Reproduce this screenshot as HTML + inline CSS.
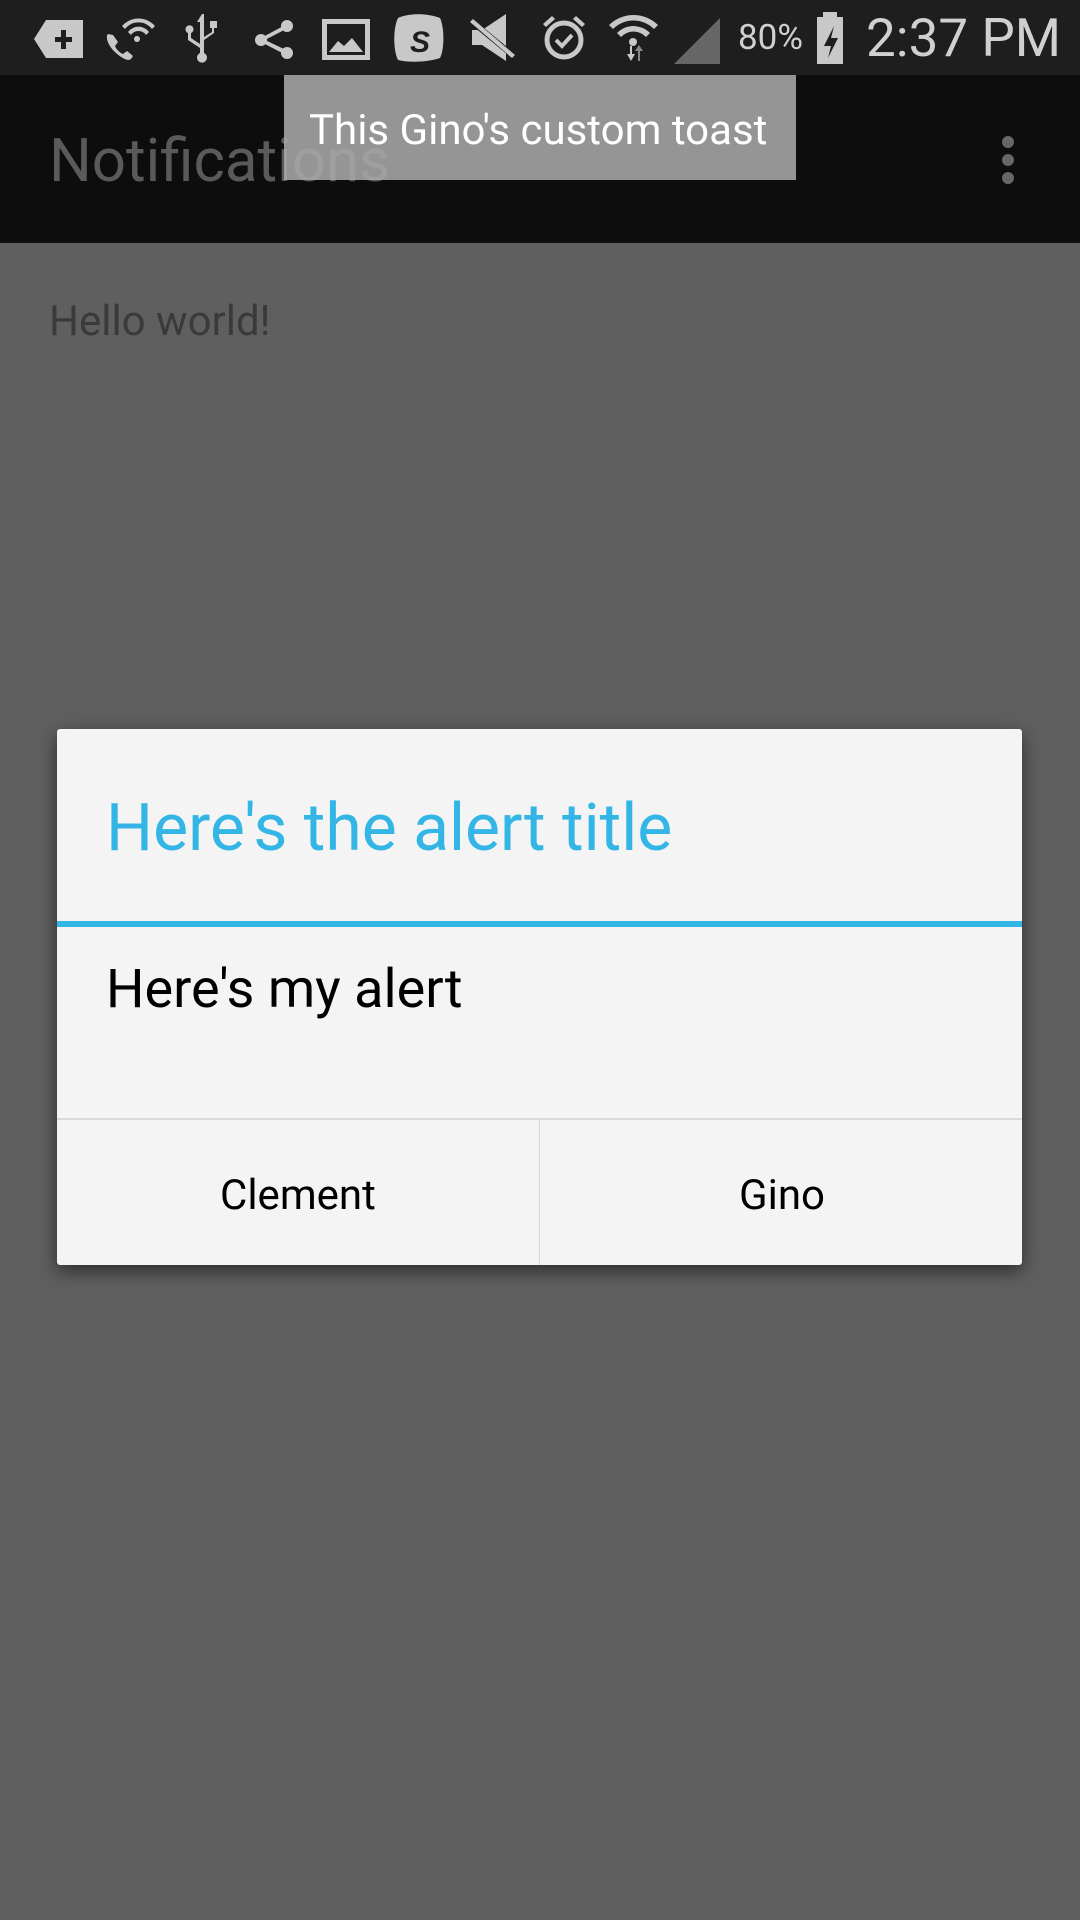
<!DOCTYPE html>
<html><head><meta charset="utf-8"><style>
*{margin:0;padding:0;box-sizing:border-box}
body{width:1080px;height:1920px;background:#5f5f5f;position:relative;overflow:hidden;font-family:"Roboto","Liberation Sans",sans-serif}
.sb{position:absolute;left:0;top:0;width:1080px;height:75px;background:#1e1e1e}
.ab{position:absolute;left:0;top:75px;width:1080px;height:168px;background:#0d0d0d}
.t{position:absolute;white-space:nowrap;transform-origin:0 50%}
.toast{position:absolute;left:284px;top:75px;width:512px;height:105px;background:rgba(168,168,168,.88)}
.dlg{position:absolute;left:57px;top:729px;width:965px;height:536px;background:#f4f4f4;border-radius:3px;box-shadow:0 6px 18px rgba(0,0,0,.55)}
</style></head><body>
<div class="sb">
<svg width="1080" height="75" viewBox="0 0 1080 75" fill="#c8c8c8">
<path d="M46 20H83V58H46L34 39Z"/><path d="M55 37h6v-7h5v7h6v5h-6v7h-5v-7h-6z" fill="#1e1e1e"/>
<path d="M108 34c-3 3 0 12 8 19s13 8 15 6l2-3-6-5-4 3c-3-1-7-5-8-8l3-4-5-7z"/>
<path d="M122 26a22 22 0 0 1 33 0l-3 3a17 17 0 0 0-27 0z"/><path d="M128 32a13 13 0 0 1 21 0l-3 3a9 9 0 0 0-15 0z"/><circle cx="137" cy="39" r="3"/>
<path d="M202 14l-5 8h3v22l-9-6v-5a4 4 0 1 0-3 0v7l12 8v5a5 5 0 1 0 4 0v-13l10-7v-5h3v-7h-7v7h2v4l-8 5v-23h3z"/>
<circle cx="287" cy="26" r="6"/><circle cx="287" cy="53" r="6"/><circle cx="261" cy="40" r="6"/><path d="M261 38l26-14 1 4-25 13zM263 39l25 12-2 4-25-13z"/>
<path d="M322 19h48v41h-48zM327 24v31h38v-31z"/><path d="M329 52l9-11 6 5 8-8 11 14z"/>
<path d="M398 18c10-5 30-5 42 0 4 8 5 30 0 40-12 4-30 5-42 2-5-10-5-32 0-42z"/><text x="410" y="52" font-size="30" font-style="italic" font-weight="bold" fill="#1e1e1e" font-family="Liberation Sans">S</text>
<path d="M472 30h10l24-16v47l-24-16h-10z"/><path d="M468 22l4-4 46 38-4 4z" fill="#1e1e1e"/><path d="M470 22l3-3 42 36-3 3z"/>
<circle cx="564" cy="40" r="17" fill="none" stroke="#c8c8c8" stroke-width="5"/><path d="M556 40l6 6 10-11" fill="none" stroke="#c8c8c8" stroke-width="4"/><path d="M543 24l9-8 3 3-9 8zM585 24l-9-8-3 3 9 8z"/>
<path d="M609 25a35 35 0 0 1 49 0l-4 4a29 29 0 0 0-41 0z"/><path d="M617 33a23 23 0 0 1 33 0l-4 4a17 17 0 0 0-25 0z"/><circle cx="633" cy="42" r="4"/>
<path d="M630 46v8h-3l4 7 4-7h-3v-8z"/><path d="M638 61v-10h-3l4-6 4 6h-3v10z" fill="#888"/>
<path d="M674 64L720 18V64Z" fill="#666"/>
<path d="M817 17h6v-5h14v5h6v47h-26z"/><path d="M834 26l-10 20h7l-3 12 10-20h-7z" fill="#1e1e1e"/>
</svg>
<div class="t" style="left:738px;top:17px;font-size:35px;color:#d0d0d0">80%</div>
<div class="t" style="left:866px;top:7px;font-size:53px;color:#d0d0d0">2:37 PM</div>
</div>
<div class="ab">
<div class="t" style="left:49px;top:50px;font-size:60px;color:#5a5a5a">Notifications</div>
<div style="position:absolute;left:1002px;top:61px;width:12px;height:12px;border-radius:50%;background:#666"></div>
<div style="position:absolute;left:1002px;top:79px;width:12px;height:12px;border-radius:50%;background:#666"></div>
<div style="position:absolute;left:1002px;top:97px;width:12px;height:12px;border-radius:50%;background:#666"></div>
</div>
<div class="toast"><div class="t" style="left:25px;top:31px;font-size:42px;color:#fff">This Gino's custom toast</div></div>
<div class="t" style="left:49px;top:297px;font-size:42px;color:#3a3a3a">Hello world!</div>
<div class="dlg">
<div class="t" style="left:49px;top:61px;font-size:66px;color:#33b5e5">Here's the alert title</div>
<div style="position:absolute;left:0;top:192px;width:965px;height:6px;background:#33b5e5"></div>
<div class="t" style="left:49px;top:229px;font-size:54px;color:#000">Here's my alert</div>
<div style="position:absolute;left:0;top:389px;width:965px;height:2px;background:#d9d9d9"></div>
<div style="position:absolute;left:482px;top:391px;width:1px;height:145px;background:#d9d9d9"></div>
<div class="t" style="left:163px;top:442px;font-size:42px;color:#000">Clement</div>
<div class="t" style="left:682px;top:442px;font-size:42px;color:#000">Gino</div>
</div>
</body></html>
